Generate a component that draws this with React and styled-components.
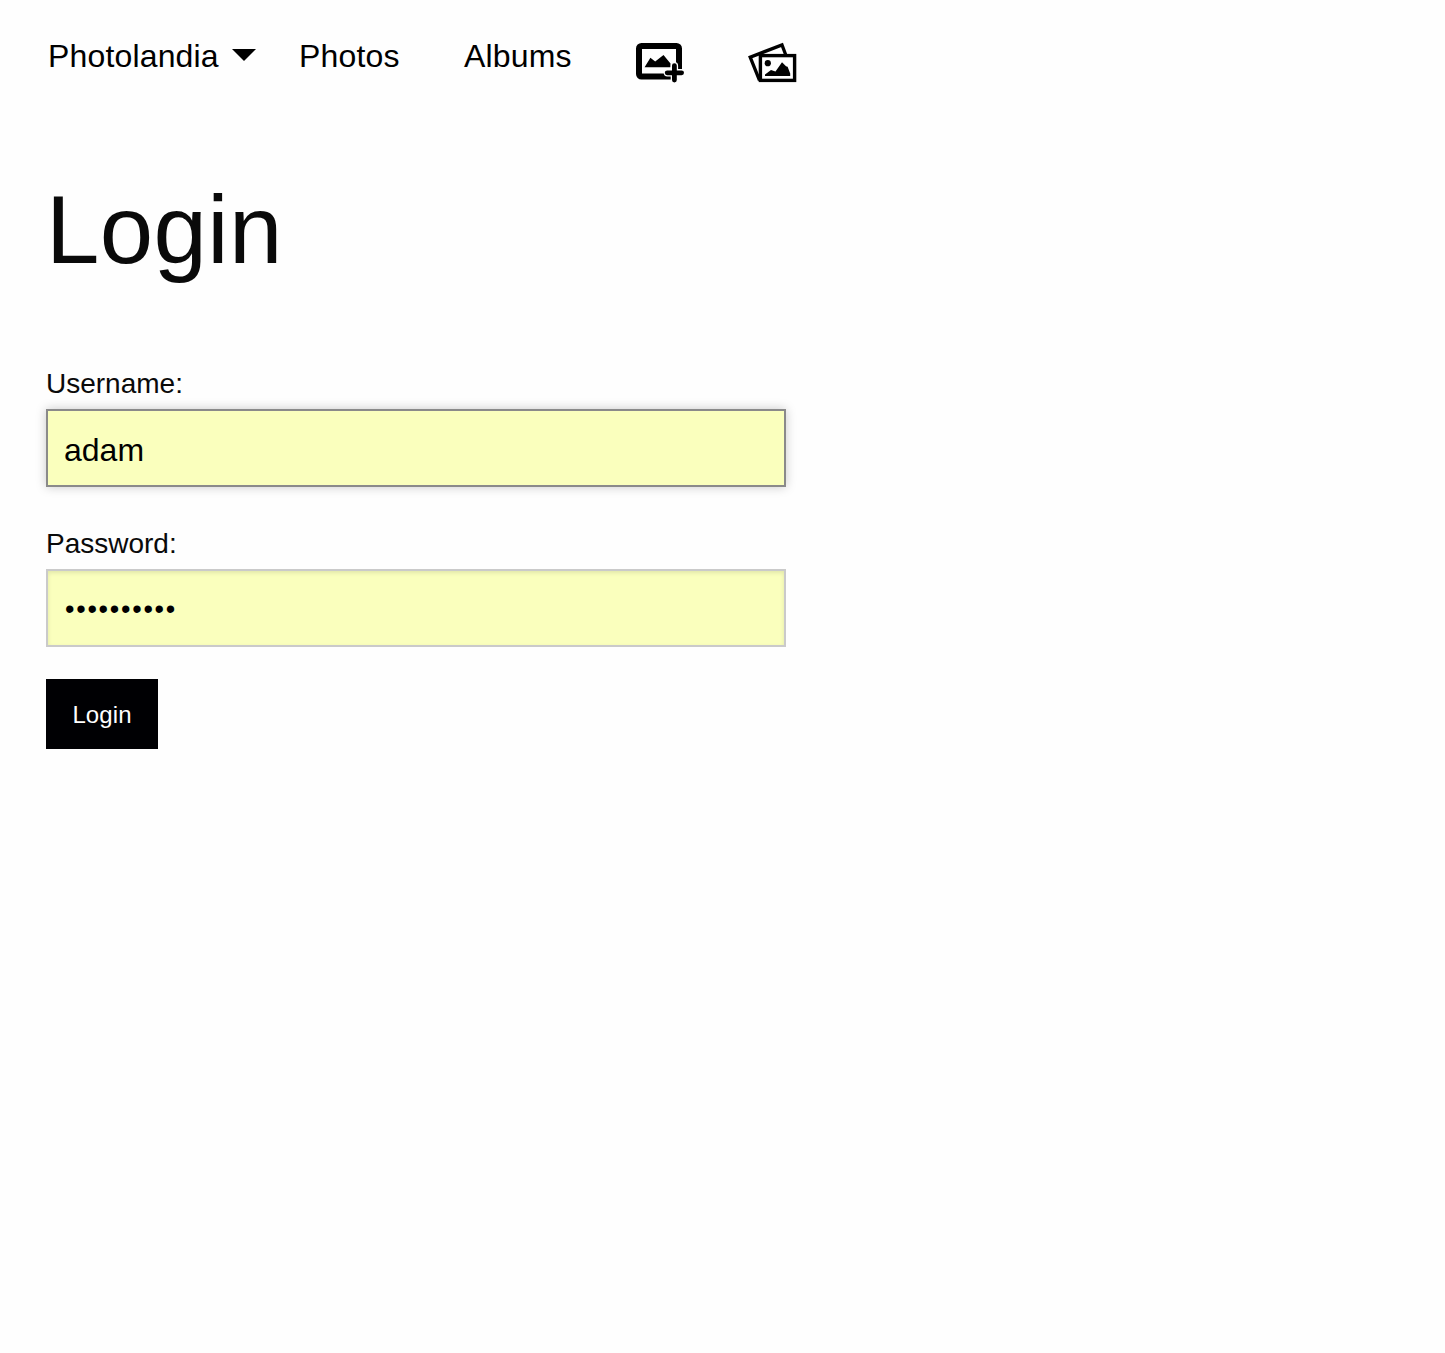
import React from "react";
import styled, { createGlobalStyle } from "styled-components";

const GlobalStyle = createGlobalStyle`
  *, *::before, *::after { box-sizing: border-box; }
  body {
    margin: 0;
    background: #fefefe;
    color: #0a0a0a;
    font-family: "Liberation Sans", Arial, sans-serif;
  }
`;

const Page = styled.div`
  min-height: 1353px;
  padding: 40px 46px 0;
`;

const Nav = styled.nav`
  display: flex;
  align-items: flex-start;
  height: 44px;
  padding-left: 2px;
`;

const NavLink = styled.a`
  display: flex;
  align-items: flex-start;
  width: ${(p) => p.$width}px;
  color: #000;
  font-size: 32px;
  line-height: 32px;
  letter-spacing: 0.16px;
  text-decoration: none;
  white-space: nowrap;
`;

const Caret = styled.span`
  margin: 9px 0 0 auto;
  border: 12px solid transparent;
  border-top-color: #000;
  border-bottom-width: 0;
`;

const Brand = styled.span`
  display: flex;
  width: 208px;
`;

const Icon = styled.svg`
  display: block;
  width: 50px;
  height: 44px;
  flex: none;
`;

const Title = styled.h1`
  margin: 79px 0 0;
  font-size: 96px;
  font-weight: 400;
  line-height: 134px;
  letter-spacing: 0.4px;
`;

const Form = styled.form`
  display: flex;
  flex-direction: column;
  align-items: flex-start;
  width: 740px;
  margin-top: 62px;
`;

const Label = styled.label`
  display: block;
  width: 100%;
  height: 50px;
  font-size: 28px;
  line-height: 50px;
`;

const Input = styled.input`
  display: block;
  width: 100%;
  height: 78px;
  margin: 0 0 32px;
  padding: 4px 16px 0;
  border: 2px solid ${(p) => (p.$active ? "#8a8a8a" : "#cacaca")};
  border-radius: 0;
  outline: none;
  background: #faffbd;
  box-shadow: ${(p) => (p.$active ? "0 0 10px #cacaca" : "inset 0 2px 4px rgba(10, 10, 10, 0.1)")};
  color: #000;
  font-family: inherit;
  font-size: 32px;

  &[type="password"] {
    padding: 2px 17px 0;
    font-size: 27px;
    letter-spacing: 1.75px;
  }
`;

const Button = styled.button`
  width: 112px;
  height: 70px;
  padding: 2px 0 0;
  border: 0;
  border-radius: 0;
  background: #000003;
  color: #fefefe;
  font-family: inherit;
  font-size: 24px;
  line-height: 24px;
  letter-spacing: 0.1px;
`;

function AddPhotoIcon() {
  return (
    <Icon viewBox="0 0 50 44" role="img" aria-label="Add photo">
      <rect x="3" y="6" width="40" height="30.5" rx="2.5" fill="none" stroke="#000" strokeWidth="6" />
      <path d="M8.6 27.3 14.4 17.8 19.2 21.4 27.5 15 34.5 23.5V27.3Z" />
      <rect x="38.4" y="32.8" width="8" height="8" fill="#fefefe" />
      <path d="M38.4 25.8V39.8M31.4 32.8H45.4" stroke="#fefefe" strokeWidth="7.4" strokeLinecap="round" />
      <path d="M38.4 25.6V40M31.2 32.8H45.6" stroke="#000" strokeWidth="4.8" strokeLinecap="round" />
    </Icon>
  );
}

function AlbumIcon() {
  return (
    <Icon viewBox="0 0 50 44" role="img" aria-label="Add album">
      <path d="M11.5 40.3 2.2 17.2 34 4.9 37.6 14.5" fill="none" stroke="#000" strokeWidth="3.3" />
      <rect x="12.4" y="15.6" width="34.2" height="24.8" fill="#fefefe" stroke="#000" strokeWidth="3.4" />
      <circle cx="19.8" cy="23.2" r="3.1" />
      <path d="M17 35.9V34.5L23 30 27.5 31.5 34 22.3 38 26.3 39.6 26.7 42.2 33.5V35.9Z" />
    </Icon>
  );
}

export default function App() {
  return (
    <>
      <GlobalStyle />
      <Page>
        <Nav>
          <NavLink $width={251}>
            <Brand>
              Photolandia
              <Caret />
            </Brand>
          </NavLink>
          <NavLink $width={165}>Photos</NavLink>
          <NavLink $width={172}>Albums</NavLink>
          <NavLink $width={112}><AddPhotoIcon /></NavLink>
          <NavLink $width={50}><AlbumIcon /></NavLink>
        </Nav>
        <Title>Login</Title>
        <Form>
          <Label htmlFor="username">Username:</Label>
          <Input id="username" type="text" defaultValue="adam" $active />
          <Label htmlFor="password">Password:</Label>
          <Input id="password" type="password" defaultValue="photolands" />
          <Button type="button">Login</Button>
        </Form>
      </Page>
    </>
  );
}
